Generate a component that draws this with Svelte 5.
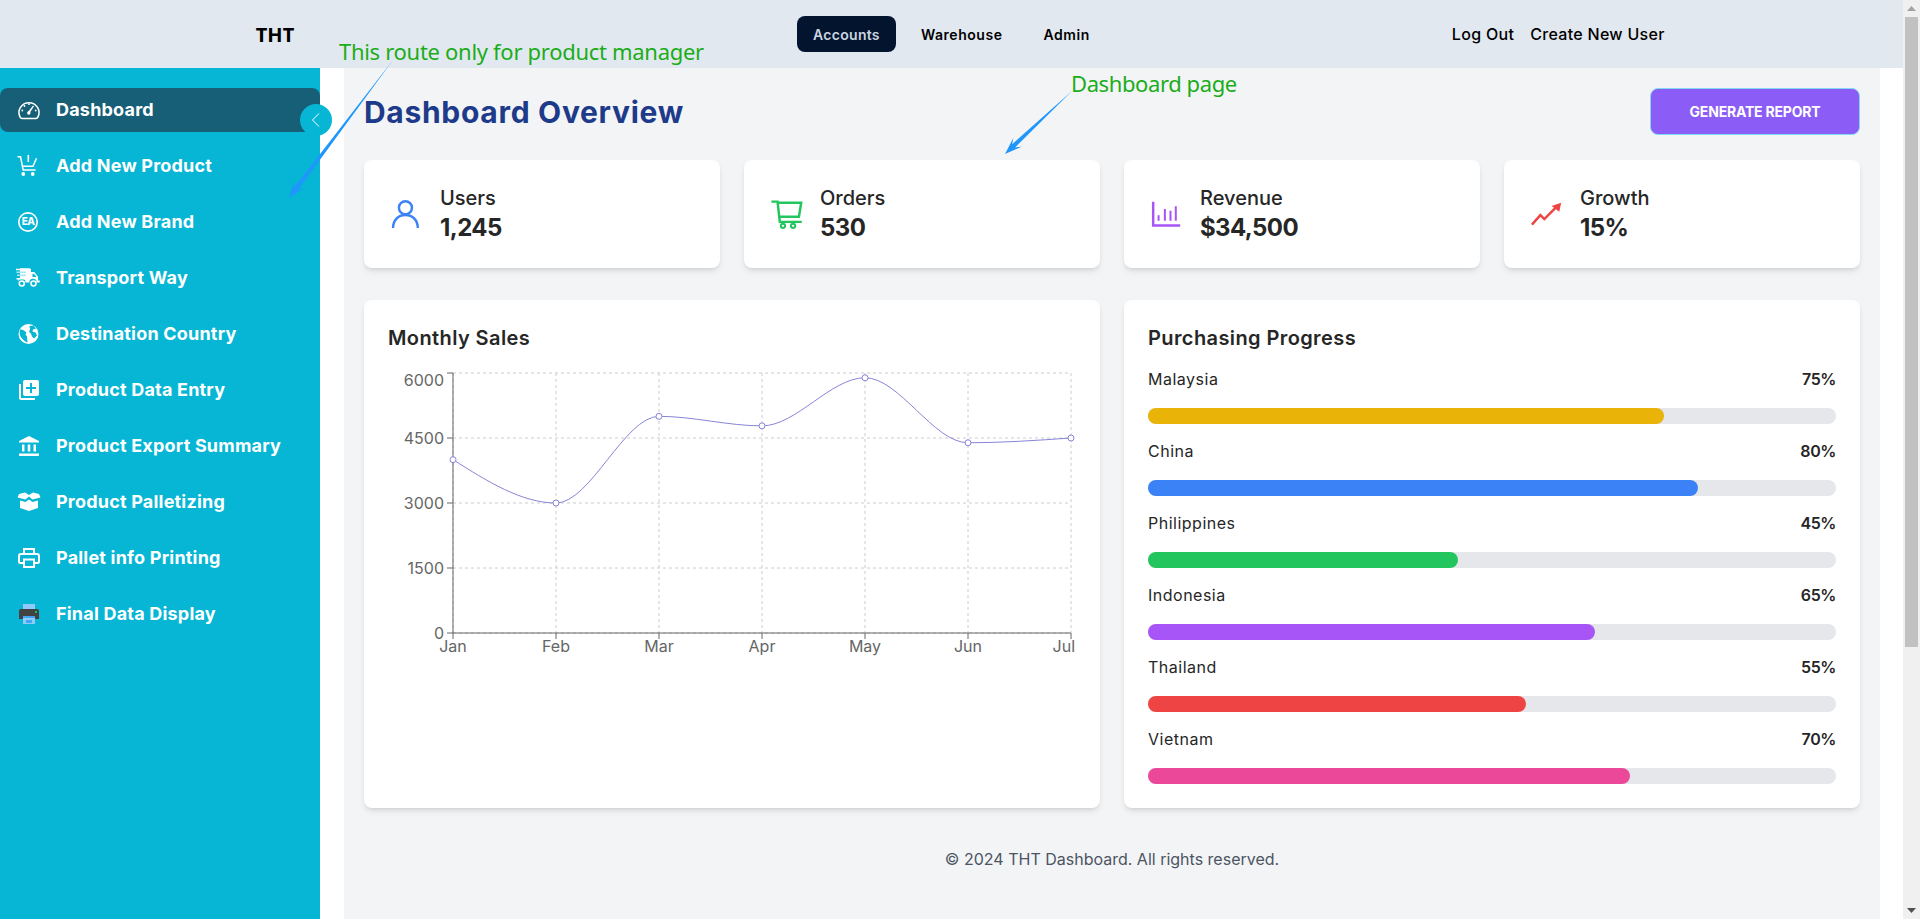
<script>
  const navItems = ['Accounts', 'Warehouse', 'Admin'];

  const sideItems = [
    'Dashboard', 'Add New Product', 'Add New Brand', 'Transport Way', 'Destination Country',
    'Product Data Entry', 'Product Export Summary', 'Product Palletizing', 'Pallet info Printing', 'Final Data Display'
  ];

  const stats = [
    { label: 'Users', value: '1,245', kind: 'users' },
    { label: 'Orders', value: '530', kind: 'orders' },
    { label: 'Revenue', value: '$34,500', kind: 'revenue' },
    { label: 'Growth', value: '15%', kind: 'growth' }
  ];

  const progress = [
    { name: 'Malaysia', pct: 75, color: '#eab308' },
    { name: 'China', pct: 80, color: '#3b82f6' },
    { name: 'Philippines', pct: 45, color: '#22c55e' },
    { name: 'Indonesia', pct: 65, color: '#a855f7' },
    { name: 'Thailand', pct: 55, color: '#ef4444' },
    { name: 'Vietnam', pct: 70, color: '#ec4899' }
  ];

  // chart, in a 688 wide box whose origin is the card's inner corner
  const left = 65, right = 683, top = 5, bottom = 265;
  const months = ['Jan', 'Feb', 'Mar', 'Apr', 'May', 'Jun', 'Jul'];
  const sales = [4000, 3000, 5000, 4780, 5890, 4390, 4500];
  const yTicks = [0, 1500, 3000, 4500, 6000];
  const stepX = (right - left) / 6;
  const px = (i) => left + stepX * i;
  const py = (v) => bottom - (v / 6000) * (bottom - top);
  const pts = sales.map((v, i) => [px(i), py(v)]);

  // monotone x curve
  function curve(p) {
    const n = p.length;
    const sl = [];
    for (let i = 0; i < n - 1; i++) sl.push((p[i + 1][1] - p[i][1]) / (p[i + 1][0] - p[i][0]));
    const t = [sl[0]];
    for (let i = 1; i < n - 1; i++) {
      t.push(sl[i - 1] * sl[i] <= 0 ? 0 : (Math.sign(sl[i - 1]) || 1) * Math.min(Math.abs(sl[i - 1]), Math.abs(sl[i]), Math.abs(sl[i - 1] + sl[i]) / 2));
    }
    t[0] = (3 * sl[0] - t[1]) / 2;
    t.push((3 * sl[n - 2] - t[n - 2]) / 2);
    let d = `M${p[0][0]},${p[0][1]}`;
    for (let i = 0; i < n - 1; i++) {
      const h = (p[i + 1][0] - p[i][0]) / 3;
      d += `C${p[i][0] + h},${p[i][1] + t[i] * h} ${p[i + 1][0] - h},${p[i + 1][1] - t[i + 1] * h} ${p[i + 1][0]},${p[i + 1][1]}`;
    }
    return d;
  }
  const line = curve(pts);

  // thin tail, thick near the head
  function arrow(sx, sy, tx, ty) {
    const len = Math.hypot(tx - sx, ty - sy);
    const ux = (tx - sx) / len, uy = (ty - sy) / len;
    const nx = -uy, ny = ux;
    const at = (back, off) => `${(tx - ux * back + nx * off).toFixed(1)},${(ty - uy * back + ny * off).toFixed(1)}`;
    return [`${sx},${sy}`, at(12, 2.2), at(17, 6), `${tx},${ty}`, at(17, -6), at(12, -2.2)].join(' ');
  }
</script>

<div class="page">
  <div class="view">
    <header class="topbar">
      <div class="brand">THT</div>
      <nav class="nav">
        {#each navItems as item, i}
          <span class="nav-item" class:current={i === 0}>{item}</span>
        {/each}
      </nav>
      <div class="user-links">
        <span>Log Out</span>
        <span>Create New User</span>
      </div>
    </header>

    <div class="body">
      <aside class="sidebar">
        {#each sideItems as item, i}
          <div class="side-item" class:current={i === 0}>
            <svg class="side-icon" viewBox="0 0 24 24" width="24" height="24">
              {#if i === 0}
                <path d="M5 20.500a2.500 2.500 0 0 1-1.900-1.300A10 10 0 1 1 20.900 19.200a2.500 2.500 0 0 1-1.900 1.300z" fill="none" stroke="#fff" stroke-width="1.500"/>
                <path d="M11 14l5-6.500 1 .8-4.500 7z" fill="#fff"/>
                <circle cx="11.800" cy="15" r="1.700" fill="#fff"/>
                <g fill="#fff"><circle cx="12" cy="6.200" r=".9"/><circle cx="7.500" cy="8" r=".9"/><circle cx="5.300" cy="12.500" r=".9"/><circle cx="18.700" cy="12.500" r=".9"/></g>
              {:else if i === 1}
                <path d="M.5 2.800h3l2.700 13.200h12.500M4.600 12.200h11.400l3.500-8" fill="none" stroke="#fff" stroke-width="1.500"/>
                <path d="M11.300 1v7" stroke="#fff" stroke-width="1.600"/>
                <circle cx="6.300" cy="20" r="1.900" fill="#fff"/><circle cx="15.700" cy="20" r="1.900" fill="#fff"/>
              {:else if i === 2}
                <circle cx="11" cy="12" r="9.200" fill="none" stroke="#fff" stroke-width="1.700"/>
                <text x="11" y="15.400" text-anchor="middle" class="ea">EA</text>
              {:else if i === 3}
                <path d="M3 2.300h9.500a1.500 1.500 0 0 1 1.500 1.500V6h3.200l3.800 4.500v4h1.700v2h-3a3.700 3.700 0 0 0-7.400 0H8.500a3.700 3.700 0 0 0-7.400 0V12H3z" fill="#fff"/>
                <path d="M-1 3.500h9M-.5 12.700h8" stroke="#fff" stroke-width="1.600"/>
                <path d="M-.5 6.300h9.500M0 9.300h9" stroke="#a5e9f5" stroke-width="1.400"/>
                <path d="M15.500 7.700h1.300l2.400 2.800v.5h-3.700z" fill="#06b6d4"/>
                <circle cx="4.800" cy="17.500" r="2.500" fill="#06b6d4" stroke="#fff" stroke-width="1.600"/>
                <circle cx="16.500" cy="17.500" r="2.500" fill="#06b6d4" stroke="#fff" stroke-width="1.600"/>
              {:else if i === 4}
                <circle cx="11.500" cy="12" r="10" fill="#fff"/>
                <path d="M3 7.500c2 0 3.500.5 4.500 1.500l2 1.500-1 2 1.500 2 .5 6c-3-1-6-4-7.500-7-.3-2-.5-3.500 0-6zM12.500 4l4-.5 2.500 3-3 1-.5 2 3 1 1.500 3-3 3-2-2-1-3-2-1.500 1-2.500z" fill="#06b6d4"/>
              {:else if i === 5}
                <path d="M4 6H2v14c0 1.100.9 2 2 2h14v-2H4V6zm16-4H8c-1.100 0-2 .9-2 2v12c0 1.100.9 2 2 2h12c1.100 0 2-.9 2-2V4c0-1.100-.9-2-2-2zm-1 9h-4v4h-2v-4H9V9h4V5h2v4h4v2z" fill="#fff"/>
              {:else if i === 6}
                <path d="M2 8.500v-1.500L12 2l10 5v1.500zM5 10.500h2.500v7H5zM10.700 10.500h2.600v7h-2.600zM16.500 10.500H19v7h-2.500zM2 19.500h20V22H2z" fill="#fff"/>
              {:else if i === 7}
                <path d="M2 4l6-1.500 4 2.500 4-2.500L22 4l1.500 3.500-8 2L12 6.500 8.500 9.500l-8-2z" fill="#fff"/>
                <path d="M3 10.500l5.500 1.500L12 9.500l3.500 2.500 5.500-1.500V18l-9 3-9-3z" fill="#fff"/>
              {:else if i === 8}
                <path d="M7 8V3h10v5M7 17H3.500A1.500 1.500 0 0 1 2 15.500V10a2 2 0 0 1 2-2h16a2 2 0 0 1 2 2v5.500a1.500 1.500 0 0 1-1.500 1.500H17M7 13.500h10V21H7z" fill="none" stroke="#fff" stroke-width="2"/>
              {:else}
                <path d="M6 2h12v6H6z" fill="#90caf9"/>
                <path d="M4 7h16a2 2 0 0 1 2 2v8H2V9a2 2 0 0 1 2-2z" fill="#424242"/>
                <path d="M6 14h12v8H6z" fill="#90caf9"/>
                <path d="M6 14h12v2H6zM9 18h6v3H9z" fill="#42a5f5"/>
                <circle cx="19" cy="10" r="1" fill="#00e676"/>
              {/if}
            </svg>
            <span>{item}</span>
          </div>
        {/each}
        <button class="collapse" aria-label="Collapse">
          <svg viewBox="0 0 16 16" width="16" height="16"><path d="M11 1.500L4.500 8l6.500 6.500" fill="none" stroke="#fff" stroke-width="1"/></svg>
        </button>
      </aside>

      <main class="content">
        <div class="title-row">
          <h1>Dashboard Overview</h1>
          <button class="report">GENERATE REPORT</button>
        </div>

        <section class="stats">
          {#each stats as s}
            <div class="card stat">
              <svg class="stat-icon" viewBox="0 0 32 32">
                {#if s.kind === 'users'}
                  <circle cx="15.500" cy="10.400" r="5.800" fill="none" stroke="#3b82f6" stroke-width="2.200"/>
                  <path d="M4.500 28.400c0-7 4.500-11.500 11-11.500s11 4.500 11 11.500" fill="none" stroke="#3b82f6" stroke-width="2.200"/>
                {:else if s.kind === 'orders'}
                  <path d="M3 5h5.500l2 18H30M9 6h20.500l-2 12.500H10" fill="none" stroke="#22c55e" stroke-width="2.200"/>
                  <circle cx="13.300" cy="26.500" r="1.900" fill="none" stroke="#22c55e" stroke-width="1.800"/><circle cx="22.300" cy="26.500" r="1.900" fill="none" stroke="#22c55e" stroke-width="1.800"/>
                {:else if s.kind === 'revenue'}
                  <path d="M4.600 5v21.300h24" fill="none" stroke="#a855f7" stroke-width="2.200"/>
                  <path d="M9.400 22v-5M15 22V11.500M20 22v-9M24.700 22V9" stroke="#a855f7" stroke-width="1.800"/>
                {:else}
                  <path d="M3.500 25.500l7.500-8.500 3.500 3.500L26 9" fill="none" stroke="#ef4444" stroke-width="2.200"/>
                  <path d="M29.500 6L21 8.800 27.800 14z" fill="#ef4444"/>
                {/if}
              </svg>
              <div>
                <div class="stat-label">{s.label}</div>
                <div class="stat-value">{s.value}</div>
              </div>
            </div>
          {/each}
        </section>

        <section class="panels">
          <div class="card panel">
            <h2>Monthly Sales</h2>
            <svg class="chart" viewBox="0 0 688 300" width="688" height="300">
              <g stroke="#ccc" stroke-dasharray="3 3">
                {#each yTicks as v}
                  <line x1={left} x2={right} y1={py(v)} y2={py(v)}/>
                {/each}
                {#each months as m, i}
                  <line x1={px(i)} x2={px(i)} y1={top} y2={bottom}/>
                {/each}
              </g>
              <g stroke="#666">
                <line x1={left} x2={left} y1={top} y2={bottom}/>
                <line x1={left} x2={right} y1={bottom} y2={bottom}/>
                {#each yTicks as v}
                  <line x1={left - 6} x2={left} y1={py(v)} y2={py(v)}/>
                {/each}
                {#each months as m, i}
                  <line x1={px(i)} x2={px(i)} y1={bottom} y2={bottom + 6}/>
                {/each}
              </g>
              <g class="tick">
                {#each yTicks as v}
                  <text x={left - 9} y={py(v) + (v === 6000 ? 13 : 6)} text-anchor="end">{v}</text>
                {/each}
                {#each months as m, i}
                  <text x={i === 6 ? right + 4 : px(i)} y={bottom + 19} text-anchor={i === 6 ? 'end' : 'middle'}>{m}</text>
                {/each}
              </g>
              <path d={line} fill="none" stroke="#8884d8"/>
              {#each pts as p}
                <circle cx={p[0]} cy={p[1]} r="3" fill="#fff" stroke="#8884d8"/>
              {/each}
            </svg>
          </div>

          <div class="card panel">
            <h2>Purchasing Progress</h2>
            <div class="bars">
              {#each progress as p}
                <div class="bar-row">
                  <div class="bar-head"><span>{p.name}</span><b>{p.pct}%</b></div>
                  <div class="track"><div class="fill" style="width:{p.pct}%;background:{p.color}"></div></div>
                </div>
              {/each}
            </div>
          </div>
        </section>

        <footer class="foot">© 2024 THT Dashboard. All rights reserved.</footer>
      </main>
    </div>
  </div>

  <div class="scrollbar">
    <div class="sb-btn"><svg viewBox="0 0 9 5" width="9" height="5"><path d="M4.500 0L9 5H0z" fill="#a3a3a3"/></svg></div>
    <div class="sb-thumb"></div>
    <div class="sb-btn sb-end"><svg viewBox="0 0 9 5" width="9" height="5"><path d="M4.500 5L9 0H0z" fill="#505050"/></svg></div>
  </div>

  <!-- screenshot annotations -->
  <svg class="marks" width="1920" height="919">
    <polygon points={arrow(393, 60, 289, 198)} fill="#1e96fc"/>
    <polygon points={arrow(1072, 91, 1005, 154)} fill="#1e96fc"/>
  </svg>
  <span class="note note-a">This route only for product manager</span>
  <span class="note note-b">Dashboard page</span>
</div>

<style>
  :global(body) {
    margin: 0;
    background: #fff;
    font-family: Inter, "Noto Sans", sans-serif;
    overflow: hidden;
  }
  .page {
    position: relative;
    display: flex;
    height: 919px;
    overflow: hidden;
  }
  .view {
    flex: 1;
    min-width: 0;
    display: flex;
    flex-direction: column;
  }
  .topbar {
    height: 68px;
    flex: none;
    display: flex;
    align-items: center;
    background: #e2e8f0;
  }
  .brand {
    width: 550px;
    text-align: center;
    font-family: "Noto Sans", sans-serif;
    font-size: 20px;
    font-weight: 700;
    color: #000;
  }
  .nav {
    display: flex;
    gap: 9px;
    margin-left: 247px;
  }
  .nav-item {
    height: 36px;
    padding: 0 16px;
    display: flex;
    align-items: center;
    border-radius: 8px;
    font-size: 14px;
    font-weight: 600;
    letter-spacing: .55px;
    color: #000;
  }
  .nav-item.current {
    background: #03142f;
    color: #cbd5e1;
    letter-spacing: .3px;
  }
  .user-links {
    margin-left: 346px;
    display: flex;
    gap: 16px;
    font-size: 16px;
    font-weight: 500;
    letter-spacing: .3px;
    color: #000;
  }
  .body {
    flex: 1;
    display: flex;
    min-height: 0;
  }
  .sidebar {
    position: relative;
    width: 320px;
    flex: none;
    box-sizing: border-box;
    padding-top: 20px;
    display: flex;
    flex-direction: column;
    gap: 12px;
    background: #06b6d4;
  }
  .side-item {
    height: 44px;
    padding-left: 17px;
    display: flex;
    align-items: center;
    gap: 15px;
    border-radius: 8px;
    color: #fff;
    font-size: 18px;
    font-weight: 700;
    letter-spacing: .2px;
  }
  .side-item span {
    padding-bottom: 2px;
  }
  .side-item.current {
    background: #165f77;
  }
  .side-icon {
    flex: none;
    overflow: visible;
  }
  .ea {
    font-size: 10px;
    font-weight: 800;
    letter-spacing: -.6px;
    fill: #fff;
  }
  .collapse {
    position: absolute;
    top: 36px;
    right: -12px;
    width: 32px;
    height: 32px;
    padding: 0;
    border: 0;
    border-radius: 50%;
    display: flex;
    align-items: center;
    justify-content: center;
    background: #06b6d4;
  }
  .content {
    flex: 1;
    min-width: 0;
    margin: 0 23px 0 24px;
    padding: 20px;
    background: #f3f4f6;
  }
  .title-row {
    height: 47px;
    display: flex;
    align-items: center;
    justify-content: space-between;
  }
  h1 {
    margin: 0;
    font-size: 30px;
    font-weight: 700;
    letter-spacing: .7px;
    color: #1e3a8a;
  }
  .report {
    width: 210px;
    height: 47px;
    box-sizing: border-box;
    border: 1px solid #7fdbf5;
    border-radius: 8px;
    background: #8b5cf6;
    color: #fff;
    font-family: inherit;
    font-size: 14px;
    font-weight: 700;
    letter-spacing: -.2px;
  }
  .stats {
    margin-top: 25px;
    display: grid;
    grid-template-columns: repeat(4, 1fr);
    gap: 24px;
  }
  .card {
    background: #fff;
    border-radius: 8px;
    box-shadow: 0 4px 6px -1px rgba(0, 0, 0, .1), 0 2px 4px -2px rgba(0, 0, 0, .1);
  }
  .stat {
    height: 108px;
    box-sizing: border-box;
    padding: 0 24px;
    display: flex;
    align-items: center;
    gap: 16px;
    color: #262626;
  }
  .stat-icon {
    flex: none;
    width: 36px;
    height: 36px;
  }
  .stat-label {
    font-size: 20px;
    font-weight: 500;
    line-height: 28px;
  }
  .stat-value {
    font-size: 24px;
    font-weight: 700;
    line-height: 32px;
    letter-spacing: -.6px;
  }
  .panels {
    margin-top: 32px;
    display: grid;
    grid-template-columns: 1fr 1fr;
    gap: 24px;
  }
  .panel {
    padding: 24px;
    min-height: 460px;
  }
  h2 {
    margin: 0 0 16px;
    font-size: 20px;
    line-height: 28px;
    font-weight: 600;
    letter-spacing: .4px;
    color: #262626;
  }
  .chart {
    display: block;
    overflow: visible;
  }
  .tick {
    font-size: 16px;
    fill: #666;
  }
  .bars {
    display: flex;
    flex-direction: column;
    gap: 16px;
  }
  .bar-head {
    height: 24px;
    margin-bottom: 16px;
    display: flex;
    align-items: center;
    justify-content: space-between;
    font-size: 16px;
    color: #262626;
  }
  .bar-head span {
    padding-bottom: 2px;
    letter-spacing: .5px;
  }
  .bar-head b {
    padding-bottom: 2px;
    font-weight: 600;
    letter-spacing: -.4px;
  }
  .track {
    height: 16px;
    border-radius: 8px;
    background: #e5e7eb;
  }
  .fill {
    height: 100%;
    border-radius: 8px;
  }
  .foot {
    margin-top: 41px;
    text-align: center;
    font-size: 16px;
    color: #4b5563;
  }
  .scrollbar {
    width: 17px;
    flex: none;
    display: flex;
    flex-direction: column;
    background: #f0f0f0;
  }
  .sb-btn {
    height: 17px;
    display: flex;
    align-items: center;
    justify-content: center;
  }
  .sb-end {
    margin-top: auto;
  }
  .sb-thumb {
    height: 630px;
    margin: 0 2px;
    background: #c1c1c1;
  }
  .marks {
    position: absolute;
    left: 0;
    top: 0;
    pointer-events: none;
  }
  .note {
    position: absolute;
    font-family: "Noto Sans", sans-serif;
    font-size: 22px;
    line-height: 30px;
    color: #1aad19;
    white-space: nowrap;
  }
  .note-a {
    left: 339px;
    top: 36px;
    letter-spacing: -.3px;
  }
  .note-b {
    left: 1071px;
    top: 68px;
    letter-spacing: -.4px;
  }
</style>
